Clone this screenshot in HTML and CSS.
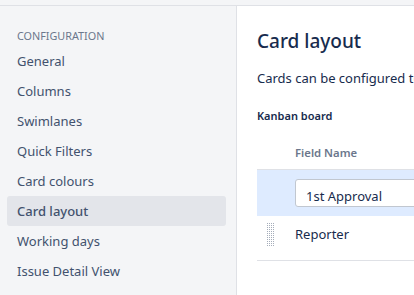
FILE: index.html
```html
<!DOCTYPE html>
<html>
<head>
<meta charset="utf-8">
<link rel="stylesheet" href="styles.css">
</head>
<body>
<div class="topbar"></div>
<div class="layout">
  <nav class="sidebar">
    <div class="nav-heading">CONFIGURATION</div>
    <a class="nav-item">General</a>
    <a class="nav-item">Columns</a>
    <a class="nav-item">Swimlanes</a>
    <a class="nav-item">Quick Filters</a>
    <a class="nav-item">Card colours</a>
    <a class="nav-item selected">Card layout</a>
    <a class="nav-item">Working days</a>
    <a class="nav-item">Issue Detail View</a>
  </nav>
  <main class="main">
    <h1 class="title">Card layout</h1>
    <p class="desc">Cards can be configured to display up to three additional fields.</p>
    <h2 class="section">Kanban board</h2>
    <div class="table">
      <div class="thead">
        <div class="col-handle"></div>
        <div class="col-name">Field Name</div>
      </div>
      <div class="row row-new">
        <div class="col-handle"></div>
        <div class="col-name"><div class="input">1st Approval</div></div>
      </div>
      <div class="row row-field">
        <div class="col-handle">
          <svg class="grip" width="8" height="23" viewBox="0 0 8 23">
            <defs>
              <pattern id="dots" width="2" height="2" patternUnits="userSpaceOnUse">
                <rect width="1" height="1" fill="#a5adba"/>
              </pattern>
            </defs>
            <rect width="8" height="23" fill="url(#dots)"/>
          </svg>
        </div>
        <div class="col-name">Reporter</div>
      </div>
    </div>
  </main>
</div>
</body>
</html>
```

FILE: styles.css
```css
* { box-sizing: border-box; }
html, body { margin: 0; padding: 0; background: #fff; }
body {
  font-family: "Noto Sans", "Open Sans", sans-serif;
  color: #172b4d;
  font-size: 13px;
  overflow: hidden;
  height: 295px;
}
.topbar {
  height: 6px;
  background: #f4f5f7;
  border-bottom: 1px solid #dfe1e6;
}
.layout {
  display: flex;
  height: 289px;
}
.sidebar {
  width: 237px;
  flex: none;
  background: #f4f5f7;
  border-right: 1px solid #dfe1e6;
  padding: 22px 10px 0 7px;
  display: flex;
  flex-direction: column;
}
.nav-heading {
  font-size: 10.8px;
  line-height: 16px;
  color: #6b778c;
  padding-left: 10px;
  margin-bottom: 2px;
}
.nav-item {
  display: block;
  height: 30px;
  line-height: 30px;
  padding-left: 10px;
  color: #42526e;
  font-size: 13px;
  border-radius: 3px;
}
.nav-item.selected {
  background: #e3e5ea;
  font-weight: 500;
}
.main {
  flex: 1;
  min-width: 0;
  overflow: hidden;
  padding: 21px 0 0 20px;
}
.title {
  margin: 0;
  font-size: 19px;
  line-height: 28px;
  font-weight: 500;
  white-space: nowrap;
}
.desc {
  margin: 13px 0 0;
  line-height: 20px;
  white-space: nowrap;
}
.section {
  margin: 20px 0 0;
  font-size: 11px;
  line-height: 16px;
  font-weight: 600;
}
.table {
  margin-top: 16px;
  width: 400px;
}
.thead {
  display: flex;
  height: 30px;
  padding-bottom: 4px;
  align-items: center;
  font-size: 11.3px;
  font-weight: 600;
  color: #6b778c;
  border-bottom: 1px solid #dfe1e6;
}
.row {
  display: flex;
  align-items: center;
}
.row-new {
  height: 46px;
  background: #deebff;
}
.row-field {
  height: 45px;
  padding-bottom: 8px;
  border-bottom: 1px solid #dfe1e6;
}
.col-handle {
  width: 38px;
  flex: none;
  display: flex;
  padding-left: 10px;
}
.col-name { flex: 1; }
.input {
  background: #fff;
  border: 1px solid #c1c7d0;
  border-radius: 3px;
  height: 28px;
  line-height: 26px;
  padding: 3px 0 0 10px;
}
.grip { display: block; }
```
